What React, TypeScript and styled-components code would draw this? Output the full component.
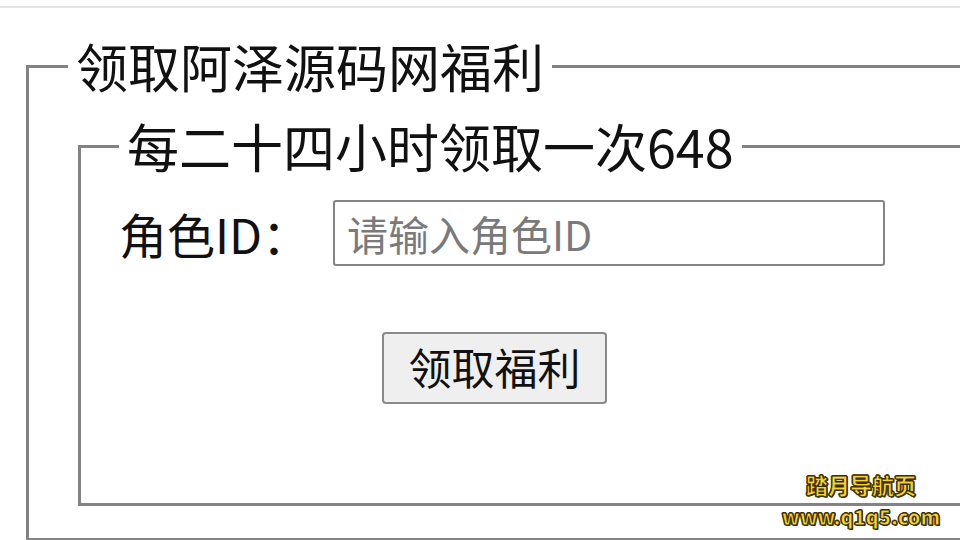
import React from "react";
import styled, { createGlobalStyle } from "styled-components";

const Global = createGlobalStyle`
  html, body {
    margin: 0;
    padding: 0;
    overflow: hidden;
    background: #ffffff;
  }
  body {
    width: 960px;
    height: 540px;
    position: relative;
    font-family: "Noto Sans CJK SC", "Noto Sans", sans-serif;
    color: #000;
  }
  *, *::before, *::after { box-sizing: border-box; }
`;

const TopRule = styled.div`
  height: 8px;
  border-bottom: 2px solid #e3e3e3;
`;

const Fieldset = styled.fieldset<{ $outer?: boolean }>`
  margin: ${(p) => (p.$outer ? "28px 0 0 26px" : "0 0 0 10px")};
  width: ${(p) => (p.$outer ? "1100px" : "1060px")};
  border: 3px solid #838383;
  padding: ${(p) => (p.$outer ? "20px 0 32px 39px" : "24px 0 99px 38px")};
  min-width: 0;
`;

const Legend = styled.legend`
  padding: 0 8px;
  font-size: 52px;
  line-height: 60px;
  font-weight: 400;
  color: #111;
  letter-spacing: 0;
`;

const FieldRow = styled.div`
  display: flex;
  align-items: center;
  height: 66px;
`;

const Label = styled.label`
  font-size: 48px;
  line-height: 58px;
  width: 214px;
  flex: none;
  color: #111;
`;

const Input = styled.input`
  width: 552px;
  height: 66px;
  border: 2px solid #858585;
  border-radius: 3px;
  padding: 0 12px;
  font-family: "Noto Sans CJK SC", "Noto Sans", sans-serif;
  font-size: 41px;
  color: #111;
  background: #fff;
  outline: none;
  &::placeholder {
    color: #7a7a7a;
  }
`;

const ButtonRow = styled.div`
  display: flex;
  padding-left: 263px;
  margin-top: 66px;
`;

const Button = styled.button`
  width: 225px;
  height: 72px;
  border: 2px solid #8a8a8a;
  border-radius: 4px;
  background: #efefef;
  font-family: "Noto Sans CJK SC", "Noto Sans", sans-serif;
  font-size: 43px;
  line-height: 1;
  color: #111;
  padding: 0 0 4px;
  cursor: pointer;
`;

const Watermark = styled.div`
  position: absolute;
  right: 14px;
  bottom: 12px;
  width: 170px;
  display: flex;
  flex-direction: column;
  align-items: center;
  gap: 8px;
  pointer-events: none;
`;

const MarkLine = styled.span<{ $size: number }>`
  font-family: "Noto Sans CJK SC", "Noto Sans", sans-serif;
  font-weight: 900;
  font-size: ${(p) => p.$size}px;
  line-height: 1.15;
  color: #f6d43a;
  -webkit-text-stroke: 1px #3d2f00;
  text-shadow: 1px 1px 0 #3d2f00, -1px 0 0 #3d2f00, 0 -1px 0 #3d2f00, 1px 0 0 #3d2f00;
  white-space: nowrap;
`;

export default function App() {
  return (
    <>
      <Global />
      <TopRule />
      <Fieldset $outer>
        <Legend>领取阿泽源码网福利</Legend>
        <Fieldset>
          <Legend>每二十四小时领取一次648</Legend>
          <FieldRow>
            <Label htmlFor="role">角色ID：</Label>
            <Input id="role" placeholder="请输入角色ID" />
          </FieldRow>
          <ButtonRow>
            <Button type="button">领取福利</Button>
          </ButtonRow>
        </Fieldset>
      </Fieldset>
      <Watermark>
        <MarkLine $size={22}>踏月导航页</MarkLine>
        <MarkLine $size={20}>www.q1q5.com</MarkLine>
      </Watermark>
    </>
  );
}
